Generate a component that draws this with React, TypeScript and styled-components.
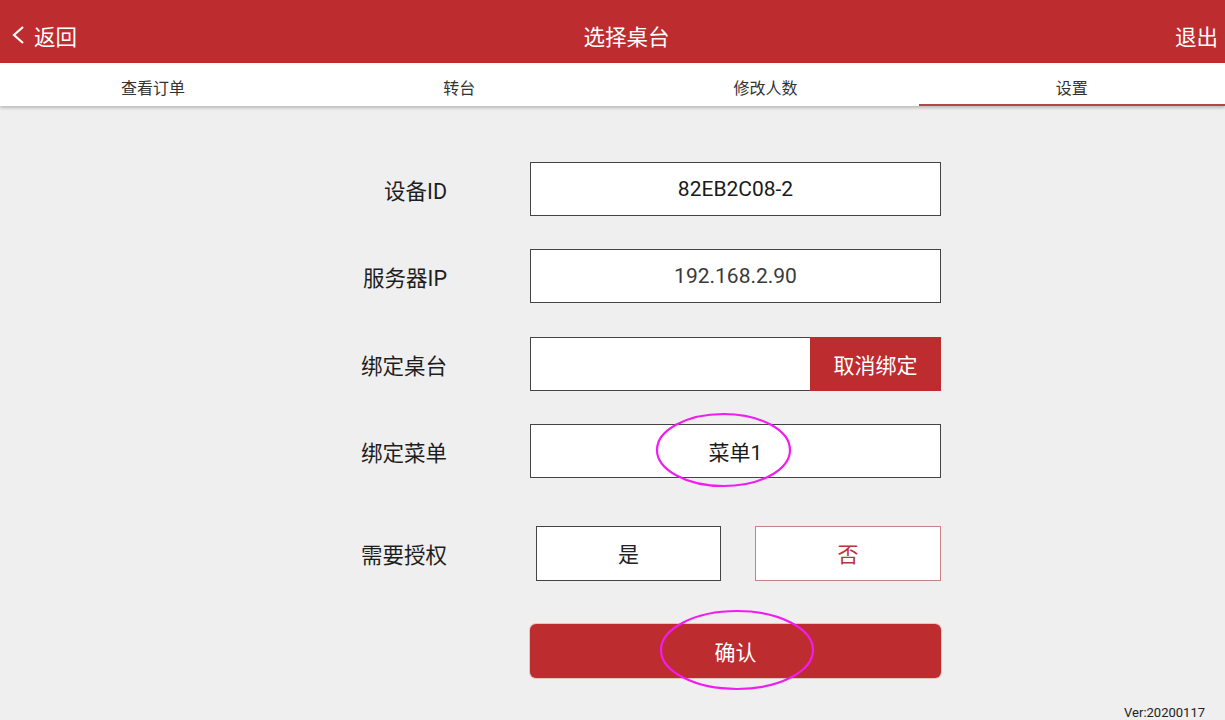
import React from "react";
import styled, { createGlobalStyle } from "styled-components";

const Global = createGlobalStyle`
  html, body { margin: 0; padding: 0; }
  body {
    background: #efefef;
    font-family: Roboto, "Noto Sans CJK SC", sans-serif;
    overflow: hidden;
  }
`;

const Page = styled.div`
  height: 720px;
  display: flex;
  flex-direction: column;
  position: relative;
`;

const Header = styled.header`
  height: 63px;
  box-sizing: border-box;
  padding: 7px 7px 0 10px;
  background: #bd2c2e;
  color: #fff;
  display: flex;
  align-items: center;
  justify-content: space-between;
  position: relative;
  font-size: 21.5px;
`;

const Back = styled.div`
  display: flex;
  align-items: center;
  gap: 7px;
`;

const Title = styled.div`
  position: absolute;
  left: 28px;
  right: 0;
  top: 7px;
  bottom: 0;
  display: flex;
  align-items: center;
  justify-content: center;
  pointer-events: none;
`;

const Tabs = styled.nav`
  height: 43px;
  background: #fff;
  display: grid;
  grid-template-columns: repeat(4, 1fr);
  box-shadow: 0 2px 3px rgba(0, 0, 0, 0.22);
  position: relative;
  z-index: 1;
`;

const Tab = styled.div<{ $active?: boolean }>`
  display: flex;
  align-items: center;
  justify-content: center;
  font-size: 16px;
  color: #333;
  padding-top: 6px;
  box-sizing: border-box;
  border-bottom: 2px solid ${(p) => (p.$active ? "#b2474b" : "transparent")};
`;

const Form = styled.div`
  display: flex;
  flex-direction: column;
  margin: 56px 0 0 247px;
`;

const Row = styled.div<{ $mt: number }>`
  display: flex;
  align-items: center;
  margin-top: ${(p) => p.$mt}px;
  height: 54px;
`;

const Label = styled.div`
  width: 200px;
  text-align: right;
  font-size: 21.5px;
  color: #1e1e1e;
  margin-right: 83px;
`;

const Box = styled.div<{ $light?: boolean }>`
  width: 411px;
  height: 54px;
  box-sizing: border-box;
  border: 1px solid #444;
  background: #fff;
  display: flex;
  align-items: center;
  justify-content: center;
  font-size: 21px;
  color: ${(p) => (p.$light ? "#3a3a3a" : "#1a1a1a")};
  position: relative;
`;

const BindBox = styled.div`
  width: 411px;
  height: 54px;
  box-sizing: border-box;
  border: 1px solid #444;
  background: #fff;
  display: flex;
  justify-content: flex-end;
`;

const Unbind = styled.div`
  width: 131px;
  margin: -1px -1px -1px 0;
  background: #bd2c2e;
  color: #fff;
  font-size: 21px;
  display: flex;
  align-items: center;
  justify-content: center;
`;

const Choices = styled.div`
  display: flex;
  gap: 34px;
  margin-left: 6px;
`;

const Choice = styled.div<{ $no?: boolean }>`
  width: ${(p) => (p.$no ? 186 : 185)}px;
  height: 55px;
  box-sizing: border-box;
  background: #fff;
  border: 1px solid ${(p) => (p.$no ? "#c88083" : "#444")};
  color: ${(p) => (p.$no ? "#b8373a" : "#222")};
  display: flex;
  align-items: center;
  justify-content: center;
  font-size: 21px;
`;

const Confirm = styled.button`
  margin-left: 283px;
  width: 411px;
  height: 54px;
  border: none;
  border-radius: 6px;
  background: #bd2c2e;
  box-shadow: 0 0 0 1px rgba(210, 120, 120, 0.35);
  color: #fff;
  font-family: inherit;
  font-size: 21px;
  display: flex;
  align-items: center;
  justify-content: center;
  position: relative;
  padding: 0;
`;

const Ring = styled.svg`
  position: absolute;
  overflow: visible;
  pointer-events: none;
`;

const Footer = styled.div`
  margin-top: auto;
  align-self: flex-end;
  padding-right: 20px;
  font-size: 13px;
  line-height: 14px;
  color: #222;
`;

const Ellipse = ({ left, top, w, h }: { left: number; top: number; w: number; h: number }) => (
  <Ring width={w} height={h} style={{ left, top }} viewBox={`0 0 ${w} ${h}`}>
    <ellipse cx={w / 2} cy={h / 2} rx={w / 2 - 1} ry={h / 2 - 1} fill="none" stroke="#f01cf0" strokeWidth="2.2" />
  </Ring>
);

export default function App() {
  return (
    <Page>
      <Global />
      <Header>
        <Back>
          <svg width="17" height="22" viewBox="0 0 17 22">
            <path d="M13 3 L4 11 L13 19" fill="none" stroke="#fff" strokeWidth="2.2" />
          </svg>
          <span>返回</span>
        </Back>
        <Title>选择桌台</Title>
        <span>退出</span>
      </Header>
      <Tabs>
        <Tab>查看订单</Tab>
        <Tab>转台</Tab>
        <Tab>修改人数</Tab>
        <Tab $active>设置</Tab>
      </Tabs>
      <Form>
        <Row $mt={0}>
          <Label>设备ID</Label>
          <Box>82EB2C08-2</Box>
        </Row>
        <Row $mt={33}>
          <Label>服务器IP</Label>
          <Box $light>192.168.2.90</Box>
        </Row>
        <Row $mt={34}>
          <Label>绑定桌台</Label>
          <BindBox>
            <Unbind>取消绑定</Unbind>
          </BindBox>
        </Row>
        <Row $mt={33}>
          <Label>绑定菜单</Label>
          <Box>
            菜单1
            <Ellipse left={125} top={-12} w={135} h={74} />
          </Box>
        </Row>
        <Row $mt={48}>
          <Label>需要授权</Label>
          <Choices>
            <Choice>是</Choice>
            <Choice $no>否</Choice>
          </Choices>
        </Row>
        <Row $mt={44}>
          <Confirm>
            确认
            <Ellipse left={130} top={-14} w={154} h={80} />
          </Confirm>
        </Row>
      </Form>
      <Footer>Ver:20200117</Footer>
    </Page>
  );
}
